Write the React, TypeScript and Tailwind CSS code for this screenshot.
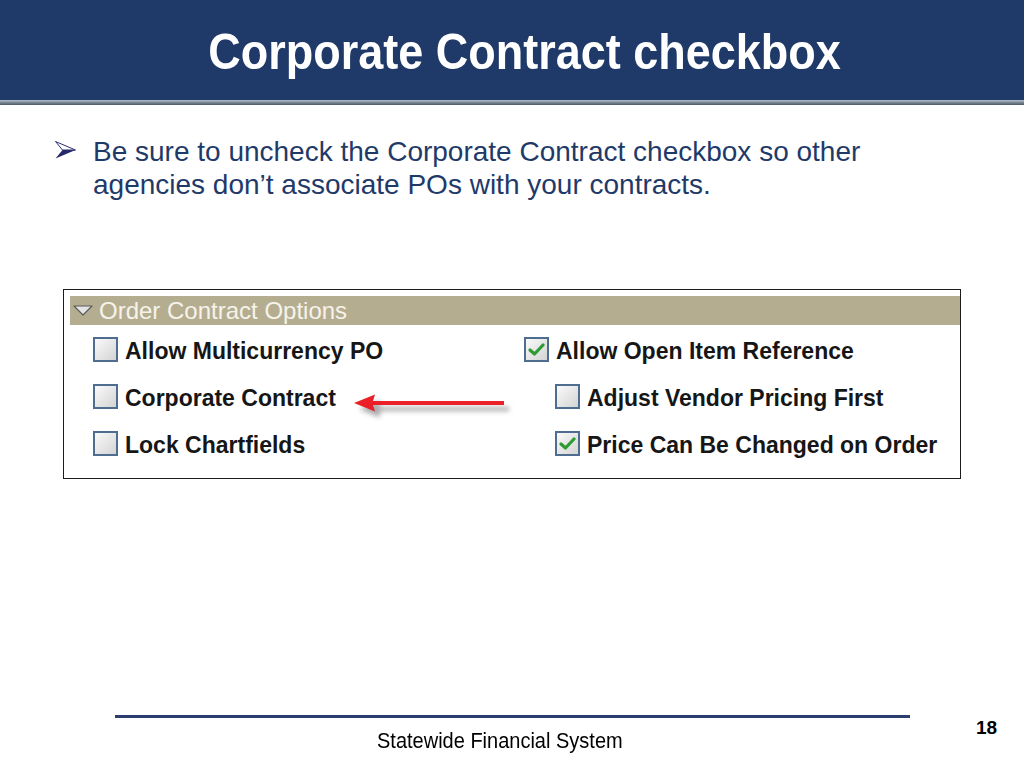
import React from 'react';

const Checkbox: React.FC<{ checked?: boolean }> = ({ checked }) => (
  <div className="w-[25px] h-[25px] shrink-0 border-2 border-[#4f6d90] bg-gradient-to-br from-[#fafafa] to-[#d4d4d4] flex items-center justify-center">
    {checked && (
      <svg width="17" height="15" viewBox="0 0 17 15">
        <path d="M2 8 L6.5 12 L15 3" fill="none" stroke="#2f9b33" strokeWidth="3.2" strokeLinecap="round" strokeLinejoin="round" />
      </svg>
    )}
  </div>
);

const Option: React.FC<{ label: string; checked?: boolean; indent?: boolean }> = ({ label, checked, indent }) => (
  <div className={`flex items-center gap-[7px] h-[25px] ${indent ? 'pl-[31px]' : ''}`}>
    <Checkbox checked={checked} />
    <span className="text-[23px] font-bold text-[#161616] leading-none pt-[4px] whitespace-nowrap">{label}</span>
  </div>
);

const App: React.FC = () => {
  return (
    <div className="w-[1024px] h-[768px] bg-white flex flex-col overflow-hidden font-['Liberation_Sans',Arial,sans-serif]">
      {/* Title bar */}
      <header className="h-[100px] bg-[#1f3a69] pt-[29px] pl-[25px] text-center">
        <h1 className="text-[45px] leading-none font-bold text-white scale-y-[1.1]">Corporate Contract checkbox</h1>
      </header>
      <div className="h-[5px] bg-gradient-to-b from-[#b4bfd0] via-[#7d8896] to-[#4f5864]" />

      {/* Bullet */}
      <div className="mt-[30px] flex pl-[55px]">
        <svg width="21" height="18" viewBox="0 0 21 18" className="mt-[6px] shrink-0">
          <path d="M0.5 0.5 L20.5 9 L7.5 9 Z" fill="#ffffff" stroke="#2a2f6e" strokeWidth="1" strokeLinejoin="round" />
          <path d="M7.5 9 L20.5 9 L0.5 17.5 Z" fill="#25286a" />
        </svg>
        <p className="ml-[17px] text-[28px] leading-[33px] text-[#1f3a69]">
          Be sure to uncheck the Corporate Contract checkbox so other<br />
          agencies don’t associate POs with your contracts.
        </p>
      </div>

      {/* Screenshot */}
      <div className="relative mt-[88px] ml-[63px] w-[898px] h-[190px] border border-[#1c1c1c] pt-[6px] pl-[6px]">
        <div className="h-[29px] bg-[#b5ad90] flex items-center pl-[3px]">
          <svg width="20" height="11" viewBox="0 0 20 11" className="shrink-0">
            <path d="M1 1 L19 1 L10 10 Z" fill="#e4e4e4" stroke="#5b5b5b" strokeWidth="1.2" strokeLinejoin="round" />
          </svg>
          <span className="ml-[6px] text-[24px] leading-none text-[#f6f3ea]">Order Contract Options</span>
        </div>
        <div className="flex pt-[12px] pl-[23px]">
          <div className="w-[431px] flex flex-col gap-[22px]">
            <Option label="Allow Multicurrency PO" />
            <Option label="Corporate Contract" />
            <Option label="Lock Chartfields" />
          </div>
          <div className="flex flex-col gap-[22px]">
            <Option label="Allow Open Item Reference" checked />
            <Option label="Adjust Vendor Pricing First" indent />
            <Option label="Price Can Be Changed on Order" checked indent />
          </div>
        </div>
        {/* red annotation arrow */}
        <svg width="170" height="36" viewBox="0 0 170 36" className="absolute left-[287px] top-[96px]">
          <defs>
            <filter id="sh" x="-10%" y="-50%" width="120%" height="200%">
              <feGaussianBlur stdDeviation="2.4" />
            </filter>
          </defs>
          <g filter="url(#sh)" opacity="0.5" transform="translate(5 6)">
            <path d="M3 17 L24 8.5 L24 15 L153 15 L153 19 L24 19 L24 25.5 Z" fill="#555" />
          </g>
          <path d="M3 17 L24 8.5 L22 15 L153 15 L153 19 L22 19 L24 25.5 Z" fill="#ea1f27" />
        </svg>
      </div>

      {/* Footer */}
      <footer className="mt-auto h-[54px] flex">
        <div className="w-[910px] pl-[115px] flex flex-col">
          <div className="mt-[1px] h-[3px] bg-[#2b3e6e]" />
          <div className="mt-[6px] pl-[262px] text-[20px] text-black whitespace-nowrap scale-y-[1.08] origin-top">Statewide Financial System</div>
        </div>
        <div className="ml-[66px] text-[19px] font-bold text-black">18</div>
      </footer>
    </div>
  );
};

export default App;
